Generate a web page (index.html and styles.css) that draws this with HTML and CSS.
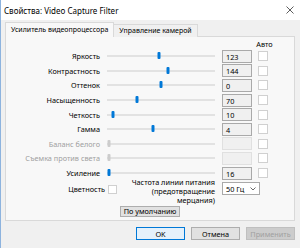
FILE: index.html
```html
<!DOCTYPE html>
<html lang="ru">

<head>
    <meta charset="UTF-8">
    <meta name="viewport" content="width=device-width, initial-scale=1.0">
    <title>Свойства: Video Capture Filter</title>
    <link rel="stylesheet" href="styles.css">
</head>

<body>
    <div class="window">
        <div class="titlebar">
            <span class="title">Свойства: Video Capture Filter</span>
            <svg class="close" width="8" height="8" viewBox="0 0 8 8">
                <path d="M0.5 0.5 L7.5 7.5 M7.5 0.5 L0.5 7.5" stroke="#333" stroke-width="0.8" fill="none" />
            </svg>
        </div>

        <div class="content">
            <div class="tabs">
                <div class="tab active">Усилитель видеопроцессора</div>
                <div class="tab">Управление камерой</div>
            </div>

            <div class="panel">
                <div class="grid">
                    <div class="auto-head">Авто</div>

                    <div class="label">Яркость</div>
                    <div class="slider"><span class="thumb" style="left: 47.9%"></span></div>
                    <div class="value">123</div>
                    <div class="check"></div>

                    <div class="label">Контрастность</div>
                    <div class="slider"><span class="thumb" style="left: 56.5%"></span></div>
                    <div class="value">144</div>
                    <div class="check"></div>

                    <div class="label">Оттенок</div>
                    <div class="slider"><span class="thumb" style="left: 49.7%"></span></div>
                    <div class="value">0</div>
                    <div class="check"></div>

                    <div class="label">Насыщенность</div>
                    <div class="slider"><span class="thumb" style="left: 27.5%"></span></div>
                    <div class="value">70</div>
                    <div class="check"></div>

                    <div class="label">Четкость</div>
                    <div class="slider"><span class="thumb" style="left: 5.8%"></span></div>
                    <div class="value">10</div>
                    <div class="check"></div>

                    <div class="label">Гамма</div>
                    <div class="slider"><span class="thumb" style="left: 42.6%"></span></div>
                    <div class="value">4</div>
                    <div class="check"></div>

                    <div class="label disabled">Баланс белого</div>
                    <div class="slider disabled"><span class="thumb" style="left: 1.4%"></span></div>
                    <div class="value disabled"></div>
                    <div class="check"></div>

                    <div class="label disabled">Съемка против света</div>
                    <div class="slider disabled"><span class="thumb" style="left: 1.4%"></span></div>
                    <div class="value disabled"></div>
                    <div class="check"></div>

                    <div class="label">Усиление</div>
                    <div class="slider"><span class="thumb" style="left: 1.6%"></span></div>
                    <div class="value">16</div>
                    <div class="check"></div>
                </div>

                <div class="power-row">
                    <div class="color-opt">
                        <span>Цветность</span>
                        <span class="check small"></span>
                    </div>
                    <div class="freq-label">Частота линии питания<br>(предотвращение<br>мерцания)</div>
                    <div class="select">
                        <span>50 Гц</span>
                        <svg width="6" height="4" viewBox="0 0 6 4">
                            <path d="M0.5 0.5 L3 3 L5.5 0.5" stroke="#444" stroke-width="0.8" fill="none" />
                        </svg>
                    </div>
                </div>

                <div class="default-row">
                    <button class="btn small-btn">По умолчанию</button>
                </div>
            </div>

            <div class="actions">
                <button class="btn primary">OK</button>
                <button class="btn">Отмена</button>
                <button class="btn" disabled>Применить</button>
            </div>
        </div>
    </div>
</body>

</html>
```

FILE: styles.css
```css
body {
    margin: 0;
    font-family: "Noto Sans", "DejaVu Sans", sans-serif;
    font-size: 7.3px;
    color: #000;
}

.window {
    width: 300px;
    height: 248px;
    box-sizing: border-box;
    background-color: #f0f0f0;
    border-left: 1px solid #8db3de;
    overflow: hidden;
}

.titlebar {
    height: 20px;
    background-color: #ffffff;
    display: flex;
    align-items: center;
    justify-content: space-between;
    padding: 0 6px 0 3px;
}

.title {
    font-size: 8px;
}

.content {
    padding: 2px 5px 0 4px;
}

.tabs {
    display: flex;
    align-items: flex-end;
    height: 15px;
    position: relative;
    z-index: 1;
}

.tab {
    height: 13px;
    line-height: 12px;
    padding: 0 5px;
    font-size: 7px;
    border: 1px solid #d9d9d9;
    border-bottom: none;
    background-color: #f0f0f0;
    box-sizing: border-box;
    white-space: nowrap;
}

.tab.active {
    height: 15px;
    line-height: 14px;
    background-color: #f8f8f8;
}

.tab + .tab {
    border-left: none;
}

.panel {
    height: 185px;
    box-sizing: border-box;
    margin-top: -1px;
    border: 1px solid #d9d9d9;
    background-color: #f8f8f8;
}

.grid {
    display: grid;
    grid-template-columns: 94px 108px 30px 10px;
    grid-template-rows: 11px;
    grid-auto-rows: 14.6px;
    column-gap: 7px;
    align-items: center;
    padding-top: 1px;
}

.auto-head {
    grid-column: 4;
    text-align: center;
    justify-self: center;
    margin-left: 1px;
}

.label {
    text-align: right;
    white-space: nowrap;
}

.disabled {
    color: #a0a0a0;
}

.slider {
    position: relative;
    height: 2px;
    background-color: #e2e2e2;
}

.thumb {
    position: absolute;
    top: -3px;
    width: 3px;
    height: 7px;
    border-radius: 1px;
    background-color: #0078d7;
    transform: translateX(-50%);
}

.slider.disabled .thumb {
    background-color: #cccccc;
}

.value {
    height: 13px;
    line-height: 12px;
    box-sizing: border-box;
    padding-left: 3px;
    border: 1px solid #a9a9a9;
    background-color: #f0f0f0;
}

.value.disabled {
    border-color: #e0e0e0;
}

.check {
    width: 10px;
    height: 10px;
    box-sizing: border-box;
    border: 1px solid #d0d0d0;
    background-color: #ffffff;
    margin-left: -1px;
}

.check.small {
    width: 9px;
    height: 9px;
    margin-left: 0;
}

.power-row {
    display: flex;
    align-items: flex-start;
    margin-top: -2px;
}

.color-opt {
    width: 111px;
    display: flex;
    justify-content: flex-end;
    align-items: center;
    gap: 3px;
    margin-top: 6px;
}

.freq-label {
    width: 98px;
    text-align: right;
    line-height: 8.7px;
}

.select {
    width: 38px;
    height: 13px;
    box-sizing: border-box;
    margin: 4px 0 0 7px;
    padding: 0 3px;
    display: flex;
    align-items: center;
    justify-content: space-between;
    border: 1px solid #a9a9a9;
    background-color: #ffffff;
}

.default-row {
    display: flex;
    justify-content: center;
    margin-top: 2px;
}

.btn {
    font-family: inherit;
    font-size: 7.3px;
    color: #000;
    width: 49px;
    height: 13px;
    padding: 0;
    border: 1px solid #adadad;
    background-color: #e1e1e1;
    white-space: nowrap;
}

.btn.small-btn {
    width: auto;
    height: 11px;
    line-height: 9px;
    padding: 0 3px;
}

.btn.primary {
    border-color: #0078d7;
    background-color: #e5f1fb;
}

.btn:disabled {
    color: #a0a0a0;
    border-color: #bfbfbf;
    background-color: #cccccc;
}

.actions {
    display: flex;
    justify-content: flex-end;
    gap: 6px;
    margin-top: 6px;
}
```
